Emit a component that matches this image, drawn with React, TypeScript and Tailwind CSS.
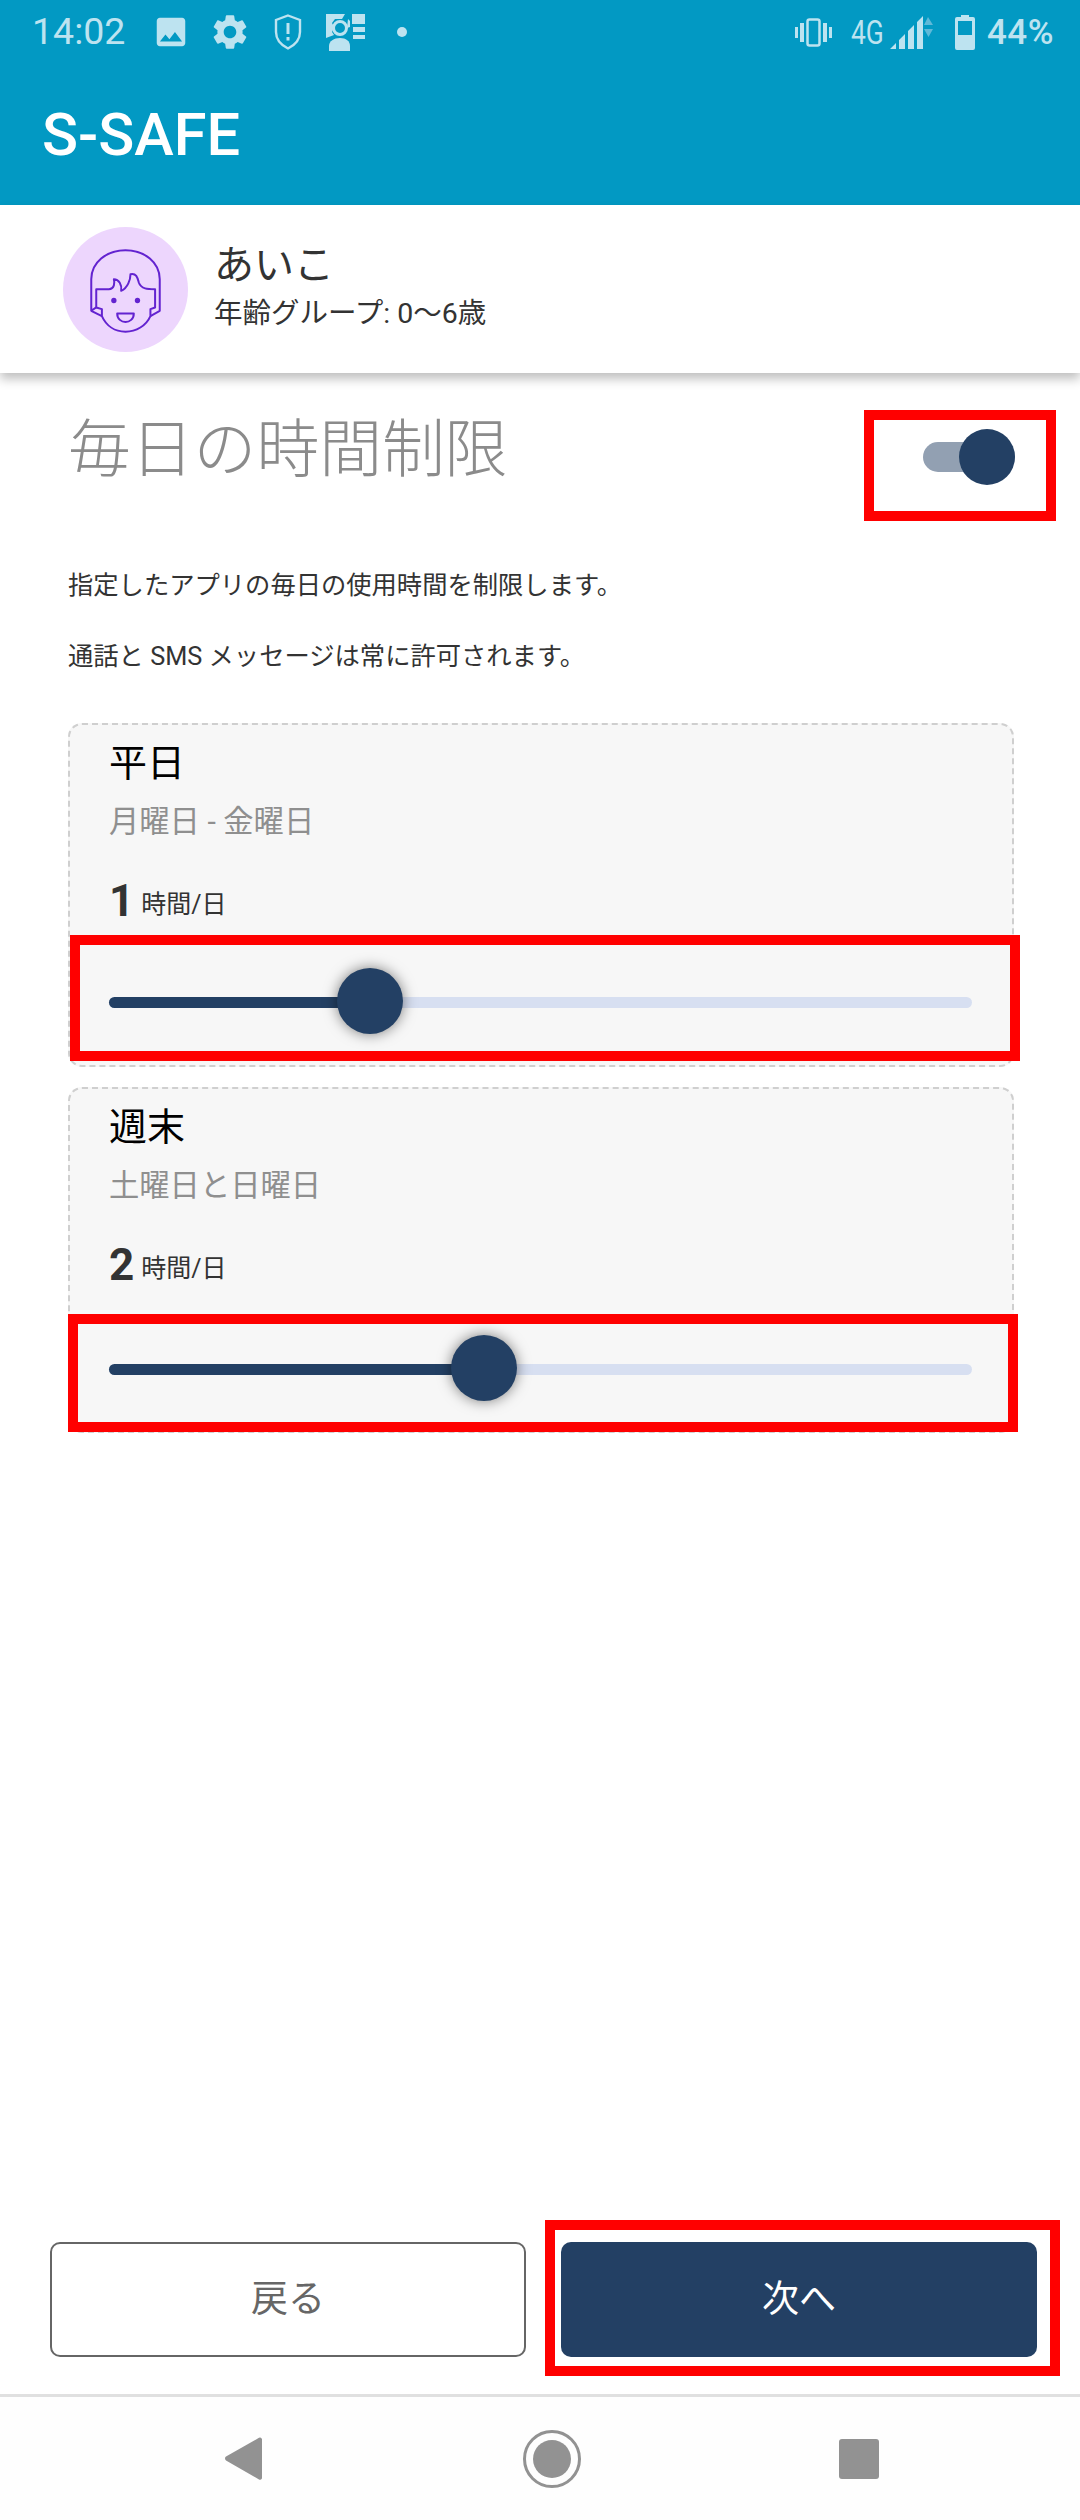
import { MdImage, MdSettings } from 'react-icons/md';

const FONT = "font-['Roboto','Noto_Sans_CJK_JP',sans-serif]";

function StatusBar() {
  return (
    <div className="flex h-[64px] items-center pl-[32px] pr-[26px] text-[#bde3f0]">
      <span className="w-[120px] text-[37.500px] leading-none">14:02</span>
      <MdImage className="h-[38px] w-[38px]" />
      <MdSettings className="ml-[19px] h-[42px] w-[42px]" />
      <svg viewBox="0 0 28 36" className="ml-[23px] h-[36px] w-[28px]" fill="none" stroke="currentColor" strokeWidth="2.4">
        <path d="M14 1.5 26 6v12c0 8-5 13-12 16.500C7 31 2 26 2 18V6z" />
        <path d="M14 9v11M14 23v3.500" strokeWidth="3" />
      </svg>
      <svg viewBox="0 0 39 37" className="ml-[24px] h-[37px] w-[39px]" fill="currentColor">
        <path d="M0 0h19l-3 5H9l-3 4 2 4-2 5 2 3-8 3zM26 0h13v10H26zM27 13h12v5H27zM27 21h12v4H27zM22 5l2 2v6l-3 1z" />
        <circle cx="14" cy="14" r="6.500" fill="none" stroke="currentColor" strokeWidth="3" />
        <path d="M3 37v-5c0-5 5-8 11-8s10 3 10 8v5z" />
      </svg>
      <span className="ml-[32px] h-[10px] w-[10px] rounded-full bg-[#bde3f0]" />
      <div className="flex-1" />
      <svg viewBox="0 0 37 29" className="h-[29px] w-[37px]" fill="currentColor">
        <path d="M0 9h3v11H0zM5 5h4v19H5zM28 5h4v19h-4zM34 9h3v11h-3z" />
        <rect x="12.500" y="1.500" width="12" height="26" rx="2" fill="none" stroke="currentColor" strokeWidth="2.500" />
      </svg>
      <span className="ml-[19px] w-[34px] origin-left scale-x-[.8] text-[33px] leading-none">4G</span>
      <svg viewBox="0 0 44 33" className="ml-[5px] h-[33px] w-[44px]" fill="currentColor">
        <path d="M0 33 6 27v6zM9 24l6-6v15H9zM18 15l6-6v24h-6zM27 6l6-6v33h-6z" />
        <path d="m38 1 5 8H34zM34 13h9l-4.500 8z" fill="#5fb9d8" />
      </svg>
      <svg viewBox="0 0 20 35" className="ml-[21px] h-[35px] w-[20px]" fill="currentColor">
        <path fillRule="evenodd" d="M6 0h8v2h4a2 2 0 0 1 2 2v29a2 2 0 0 1-2 2H2a2 2 0 0 1-2-2V4a2 2 0 0 1 2-2h4zM3 6v14h14V6z" />
      </svg>
      <span className="ml-[12px] text-[35px] font-medium leading-none tracking-[.5px]">44%</span>
    </div>
  );
}

function Avatar() {
  return (
    <div className="flex h-[125px] w-[125px] shrink-0 items-center justify-center rounded-full bg-[#edd6fd]">
      <svg viewBox="40 48 376 376" className="h-[125px] w-[125px]" fill="none" stroke="#6323d0" strokeWidth="6" strokeLinejoin="round">
        <path d="M140 290 125 300V205C125 155 170 118 228 118S331 155 331 205V300L303 316" />
        <path d="M125 300 157 316" />
        <path d="M140 235H178C195 235 196 215 193 205 208 205 218 222 215 240 235 232 243 205 243 190 262 185 265 205 268 215 275 235 295 235 317 235V290L303 295V316C290 345 260 363 228 363S170 345 157 316V295L140 290Z" />
        <path d="M203 308H253C253 325 240 334 228 334S203 325 203 308Z" />
        <circle cx="193" cy="269" r="8" fill="#6323d0" stroke="none" />
        <circle cx="264" cy="269" r="8" fill="#6323d0" stroke="none" />
      </svg>
    </div>
  );
}

function Slider({ percent }: { percent: number }) {
  return (
    <div className="relative ml-[39px] mr-[40px] h-[11px] rounded-full bg-[#d7dff1]">
      <div className="h-full rounded-full bg-[#234064]" style={{ width: `${percent}%` }} />
      <div
        className="absolute top-[-29px] h-[66px] w-[66px] -translate-x-1/2 rounded-full bg-[#234064] shadow-[0_0_14px_rgba(0,0,0,0.5)]"
        style={{ left: `${percent}%` }}
      />
    </div>
  );
}

type LimitCardProps = {
  title: string;
  days: string;
  hours: number;
  percent: number;
  heightClass: string;
  sliderClass: string;
  frameClass: string;
};

function LimitCard({ title, days, hours, percent, heightClass, sliderClass, frameClass }: LimitCardProps) {
  return (
    <div className={`relative rounded-[14px] border-2 border-dashed border-[#cfcfcf] bg-[#f7f7f7] ${heightClass}`}>
      <div className="pl-[39px] pt-[16px]">
        <div className="text-[38px] leading-[44px] text-black">{title}</div>
        <div className="mt-[15px] text-[30.300px] leading-[44px] text-[#8f8f8f]">{days}</div>
        <div className="mt-[35px] flex h-[44px] items-end text-[#333]">
          <span className="text-[44px] font-bold leading-[44px]">{hours}</span>
          <span className="mb-[2px] ml-[7px] text-[25px] leading-[32px]">時間/日</span>
        </div>
      </div>
      <div className={sliderClass}>
        <Slider percent={percent} />
      </div>
      {/* annotation frame */}
      <div className={`absolute border-[10px] border-[#ff0000] ${frameClass}`} />
    </div>
  );
}

export default function App() {
  return (
    <div className={`flex h-[2520px] w-[1080px] flex-col overflow-hidden bg-white ${FONT}`}>
      {/* Header */}
      <div className="h-[205px] bg-[#0299c3]">
        <StatusBar />
        <div className="pl-[42px] pt-[45px] text-[59.500px] font-medium leading-[52px] text-white">S-SAFE</div>
      </div>

      {/* Profile */}
      <div className="relative z-10 flex h-[168px] items-center bg-white pl-[63px] shadow-[0_6px_10px_rgba(0,0,0,0.25)]">
        <Avatar />
        <div className="ml-[26px] text-[#333]">
          <div className="mt-[-4px] text-[40px] leading-[48px]">あいこ</div>
          <div className="mt-[6px] text-[28.500px] leading-[36px]">年齢グループ: 0〜6歳</div>
        </div>
      </div>

      {/* Content */}
      <div className="flex-1 pl-[68px] pr-[66px]">
        <div className="flex h-[155px] items-start justify-between">
          <h1 className="pt-[38px] text-[62.800px] font-light leading-[78px] text-[#8b8b8b]">毎日の時間制限</h1>
          <div className="relative mr-[-1px] mt-[69px] h-[30px] w-[92px] rounded-full bg-[#92a0b2]">
            <div className="absolute right-0 top-[-13px] h-[56px] w-[56px] rounded-full bg-[#234064]" />
            <div className="absolute left-[-59px] top-[-32px] h-[111px] w-[192px] border-[10px] border-[#ff0000]" />
          </div>
        </div>
        <div className="text-[25.300px] leading-[36px] text-[#333]">
          <p className="pt-[40px]">指定したアプリの毎日の使用時間を制限します。</p>
          <p className="mt-[35px]">通話と SMS メッセージは常に許可されます。</p>
        </div>
        <div className="mt-[48px] flex flex-col gap-[20px]">
          <LimitCard
            title="平日"
            days="月曜日 - 金曜日"
            hours={1}
            percent={30.2}
            heightClass="h-[344px]"
            sliderClass="mt-[74px]"
            frameClass="left-0 top-[210px] h-[126px] w-[950px]"
          />
          <LimitCard
            title="週末"
            days="土曜日と日曜日"
            hours={2}
            percent={43.5}
            heightClass="h-[346px]"
            sliderClass="mt-[77px]"
            frameClass="left-[-2px] top-[225px] h-[118px] w-[950px]"
          />
        </div>
      </div>

      {/* Buttons */}
      <div className="flex gap-[35px] pb-[37px] pl-[50px] pr-[43px]">
        <button className="flex h-[115px] w-[476px] items-center justify-center rounded-[10px] border-2 border-[#666] bg-white text-[37px] text-[#666]">
          戻る
        </button>
        <button className="relative flex h-[115px] w-[476px] items-center justify-center rounded-[10px] bg-[#234064] text-[37px] text-white">
          次へ
          <span className="absolute left-[-16px] top-[-22px] h-[156px] w-[515px] border-[10px] border-[#ff0000]" />
        </button>
      </div>

      {/* Navigation bar */}
      <div className="flex h-[126px] items-center border-t-[3px] border-[#e0e0e0] bg-[#fefefe]">
        <div className="flex w-[262px] justify-end">
          <svg viewBox="0 0 37 43" className="h-[43px] w-[37px]" fill="#929292">
            <path d="M34 .8a2 2 0 0 1 3 1.500V41a2 2 0 0 1-3 1.500L1 23.500a2.500 2.500 0 0 1 0-4z" />
          </svg>
        </div>
        <div className="ml-[261px] flex h-[58px] w-[58px] items-center justify-center rounded-full border-[3px] border-[#929292]">
          <div className="h-[38px] w-[38px] rounded-full bg-[#929292]" />
        </div>
        <div className="ml-[258px] h-[40px] w-[40px] rounded-[3px] bg-[#929292]" />
      </div>
    </div>
  );
}
